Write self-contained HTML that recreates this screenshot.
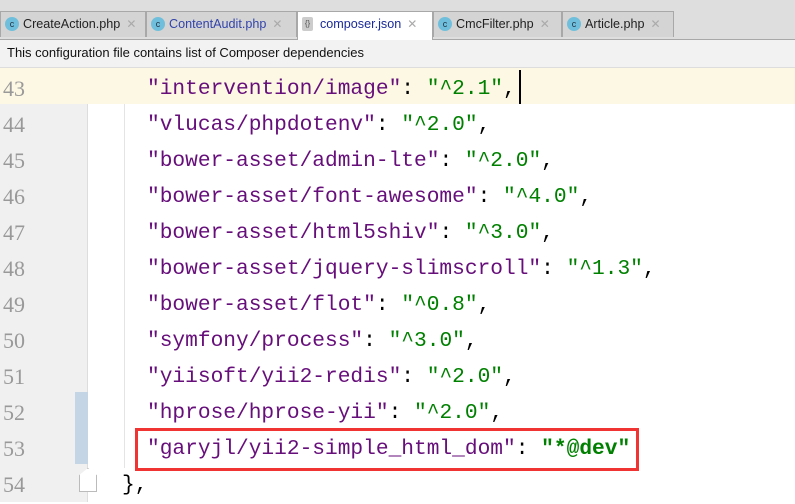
<!DOCTYPE html>
<html><head><meta charset="utf-8"><style>
*{margin:0;padding:0;box-sizing:border-box}
body{width:795px;height:502px;overflow:hidden;background:#fff;font-family:"Liberation Sans",sans-serif;position:relative}
.tabbar{position:absolute;left:0;top:0;width:795px;height:40px;background:#dedede;border-bottom:1px solid #a8a8a8}
.tab{position:absolute;top:11px;height:26px;background:#d4d4d4;border:1px solid #a8a8a8;border-bottom:none;font-size:12.6px;color:#222;line-height:24px;padding-left:22px;white-space:nowrap;overflow:hidden}
.tab .c{position:absolute;left:4px;top:5px;width:14px;height:14px;border-radius:50%;background:#6fbfdc;color:#234;font-size:9px;line-height:14px;text-align:center}
.tab .x{color:#aaa;margin-left:6px;font-size:12px}
.info{position:absolute;left:0;top:40px;width:795px;height:28px;background:#f2f2f2;border-bottom:1px solid #ddd;font-size:13px;line-height:26px;padding-left:7px;color:#111}
.gut{position:absolute;left:0;top:68px;width:88px;height:434px;background:#f0f0f0;border-right:1px solid #ddd}
.ln{position:absolute;left:3px;width:60px;font-family:"Liberation Serif",serif;font-size:22px;color:#999;height:36px;line-height:38px}
.code{position:absolute;left:147px;font-family:"Liberation Mono",monospace;font-size:21.2px;height:36px;line-height:38px;white-space:pre;color:#000}
.k{color:#660e7a}.v{color:#008000}
</style></head><body>
<div class="tabbar">
<div class="tab" style="left:0;width:146px"><span class="c">c</span>CreateAction.php<span class="x">✕</span></div>
<div class="tab" style="left:146px;width:151px;color:#3344aa"><span class="c">c</span>ContentAudit.php<span class="x">✕</span></div>
<div class="tab" style="left:297px;width:136px;background:#fff;height:29px;color:#1a2a9a"><span class="c" style="background:#ccc;border-radius:2px;width:11px;color:#555;font-size:8px">{}</span>composer.json<span class="x">✕</span></div>
<div class="tab" style="left:433px;width:129px"><span class="c">c</span>CmcFilter.php<span class="x">✕</span></div>
<div class="tab" style="left:562px;width:112px"><span class="c">c</span>Article.php<span class="x">✕</span></div>
</div>
<div class="info">This configuration file contains list of Composer dependencies</div>
<div style="position:absolute;left:0;top:68px;width:795px;height:36px;background:#fdf8e3"></div>
<div class="gut"></div>
<div style="position:absolute;left:0;top:68px;width:88px;height:36px;background:#fdf8e3"></div>
<div style="position:absolute;left:124px;top:104px;width:1px;height:364px;background:#e4e4e4"></div>
<div style="position:absolute;left:75px;top:392px;width:13px;height:72px;background:#c4d6e6"></div>
<div style="position:absolute;left:79px;top:468px;width:18px;height:24px;border:1px solid #bbb;background:#fff;clip-path:polygon(50% 0,100% 30%,100% 100%,0 100%,0 30%)"></div>
<div class="ln" style="top:70px">43</div><div class="ln" style="top:106px">44</div><div class="ln" style="top:142px">45</div><div class="ln" style="top:178px">46</div><div class="ln" style="top:214px">47</div><div class="ln" style="top:250px">48</div><div class="ln" style="top:286px">49</div><div class="ln" style="top:322px">50</div><div class="ln" style="top:358px">51</div><div class="ln" style="top:394px">52</div><div class="ln" style="top:430px">53</div><div class="ln" style="top:466px">54</div>
<div class="code" style="top:70px"><span class="k">"intervention/image"</span>: <span class="v">"^2.1"</span>,</div>
<div style="position:absolute;left:519px;top:70px;width:2px;height:34px;background:#000"></div>
<div class="code" style="top:106px"><span class="k">"vlucas/phpdotenv"</span>: <span class="v">"^2.0"</span>,</div>
<div class="code" style="top:142px"><span class="k">"bower-asset/admin-lte"</span>: <span class="v">"^2.0"</span>,</div>
<div class="code" style="top:178px"><span class="k">"bower-asset/font-awesome"</span>: <span class="v">"^4.0"</span>,</div>
<div class="code" style="top:214px"><span class="k">"bower-asset/html5shiv"</span>: <span class="v">"^3.0"</span>,</div>
<div class="code" style="top:250px"><span class="k">"bower-asset/jquery-slimscroll"</span>: <span class="v">"^1.3"</span>,</div>
<div class="code" style="top:286px"><span class="k">"bower-asset/flot"</span>: <span class="v">"^0.8"</span>,</div>
<div class="code" style="top:322px"><span class="k">"symfony/process"</span>: <span class="v">"^3.0"</span>,</div>
<div class="code" style="top:358px"><span class="k">"yiisoft/yii2-redis"</span>: <span class="v">"^2.0"</span>,</div>
<div class="code" style="top:394px"><span class="k">"hprose/hprose-yii"</span>: <span class="v">"^2.0"</span>,</div>
<div class="code" style="top:430px"><span class="k">"garyjl/yii2-simple_html_dom"</span>: <span class="v" style="font-weight:bold">"*@dev"</span></div>
<div class="code" style="top:466px;left:122px">},</div>
<div style="position:absolute;left:135px;top:428px;width:504px;height:43px;border:3px solid #f03434"></div>
</body></html>
